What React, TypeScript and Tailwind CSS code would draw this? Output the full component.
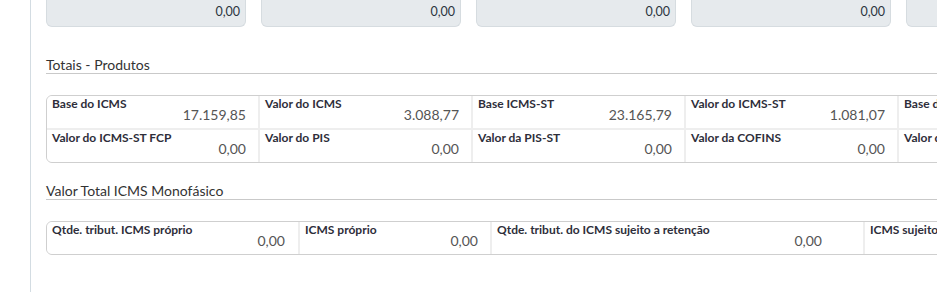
import React from 'react';

const font = { fontFamily: 'Lato, "Liberation Sans", sans-serif' };

interface CellProps {
  label: string;
  value?: string;
  width: string;
  pr?: string;
}

function Cell({ label, value, width, pr = 'pr-[12px]' }: CellProps) {
  return (
    <div className={`${width} shrink-0 bg-white pl-[5px] ${pr} pt-[1px] h-[32px] flex flex-col`}>
      <span className="text-[12px] font-bold text-[#2e2e3a] leading-[14px] whitespace-nowrap">{label}</span>
      <span className="-mt-[4px] text-[14px] text-[#555] leading-[16px] text-right whitespace-nowrap">{value}</span>
    </div>
  );
}

function SectionTitle({ children }: { children: React.ReactNode }) {
  return (
    <div className="border-b border-[#c9c9c9]">
      <h2 className="text-[14px] text-[#333] leading-[17px]">{children}</h2>
    </div>
  );
}

const topCards = ['0,00', '0,00', '0,00', '0,00', ''];

const produtos = [
  [
    { label: 'Base do ICMS', value: '17.159,85' },
    { label: 'Valor do ICMS', value: '3.088,77' },
    { label: 'Base ICMS-ST', value: '23.165,79' },
    { label: 'Valor do ICMS-ST', value: '1.081,07' },
    { label: 'Base do ICMS-ST Retido', value: '' },
  ],
  [
    { label: 'Valor do ICMS-ST FCP', value: '0,00' },
    { label: 'Valor do PIS', value: '0,00' },
    { label: 'Valor da PIS-ST', value: '0,00' },
    { label: 'Valor da COFINS', value: '0,00' },
    { label: 'Valor da COFINS-ST', value: '' },
  ],
];

export default function App() {
  return (
    <div className="w-[937px] h-[292px] bg-white overflow-hidden flex" style={font}>
      <div className="w-[30px] shrink-0" />
      <div className="w-[1px] shrink-0 bg-[#d3dce2]" />
      <div className="flex-1 min-w-0 pl-[15px] overflow-hidden">
        <div className="flex gap-[15px]">
          {topCards.map((v, i) => (
            <div
              key={i}
              className="w-[200px] h-[27px] shrink-0 bg-[#e6eaed] border border-t-0 border-[#d6dce0] rounded-b-[6px] flex items-center justify-end pr-[5px] pb-[2px]"
            >
              <span className="text-[12.5px] text-[#2b3440]">{v}</span>
            </div>
          ))}
        </div>

        <div className="mt-[29px]">
          <SectionTitle>Totais - Produtos</SectionTitle>
        </div>

        <div className="mt-[21px] w-[1100px] border border-[#cfcfcf] rounded-[6px] bg-[#eeeeee] flex flex-col gap-[2px] overflow-hidden">
          {produtos.map((row, r) => (
            <div key={r} className="flex gap-[2px]">
              {row.map((c) => (
                <Cell key={c.label} label={c.label} value={c.value} width="w-[211px]" />
              ))}
            </div>
          ))}
        </div>

        <div className="mt-[19px]">
          <SectionTitle>Valor Total ICMS Monofásico</SectionTitle>
        </div>

        <div className="mt-[21px] w-[1100px] border border-[#cfcfcf] rounded-[6px] bg-[#eeeeee] flex gap-[2px] overflow-hidden">
          <Cell label="Qtde. tribut. ICMS próprio" value="0,00" width="w-[251px]" pr="pr-[13px]" />
          <Cell label="ICMS próprio" value="0,00" width="w-[190px]" pr="pr-[12px]" />
          <Cell label="Qtde. tribut. do ICMS sujeito a retenção" value="0,00" width="w-[371px]" pr="pr-[41px]" />
          <Cell label="ICMS sujeito a retenção" value="" width="w-[250px]" />
        </div>
      </div>
    </div>
  );
}
